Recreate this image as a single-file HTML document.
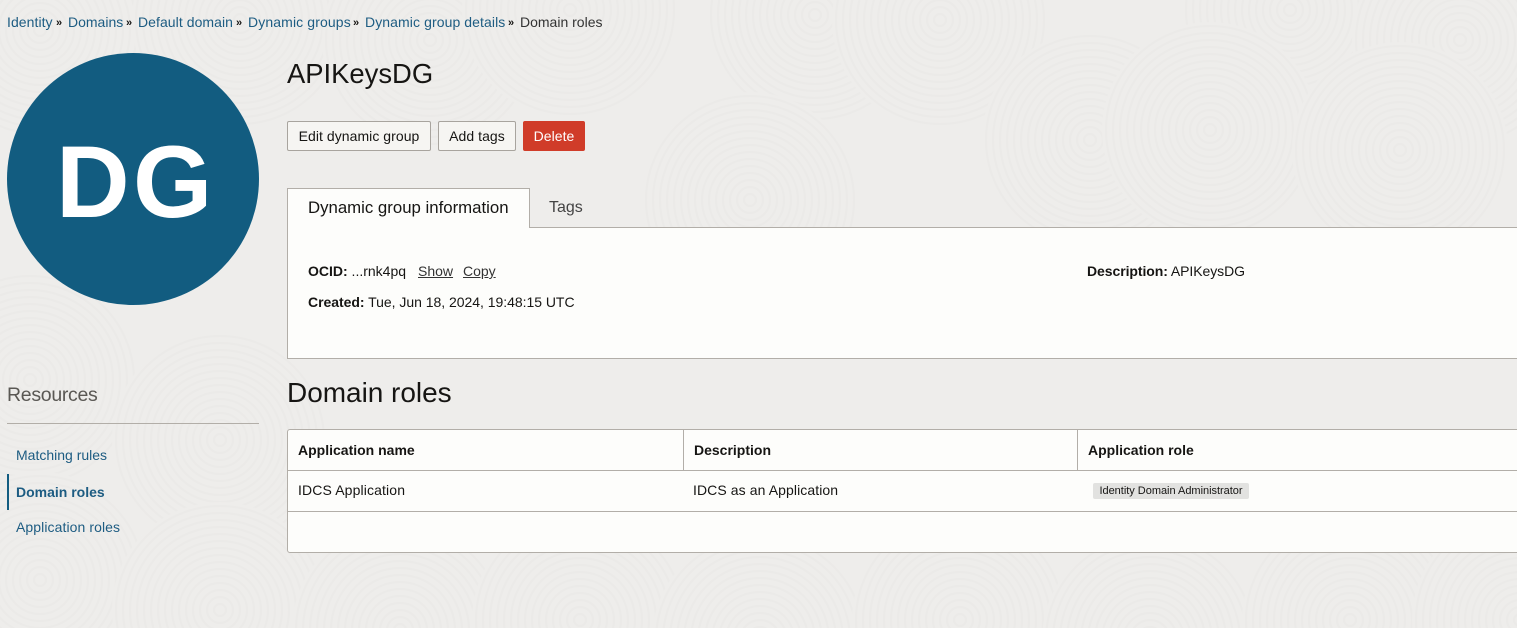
<!DOCTYPE html>
<html><head><meta charset="utf-8"><style>
html,body{margin:0;padding:0;width:1517px;height:628px;overflow:hidden;background:#eeedeb;font-family:"Liberation Sans",sans-serif;color:#161513;font-size:14px}
#w{position:absolute;left:0;top:0;width:1517px;height:628px;overflow:hidden}
.a{position:absolute;white-space:nowrap;line-height:1}
.l{color:#1d5c82}
.bg{position:absolute;left:0;top:0;display:block}
.btn{position:absolute;box-sizing:border-box;height:30px;border:1px solid #a8a49e;border-radius:2px;background:#f6f5f2;font-size:14px;line-height:28px;text-align:center;letter-spacing:.05px}
.box{position:absolute;box-sizing:border-box;background:#fdfdfb;border:1px solid #b2aea8}
.ln{position:absolute;background:#b2aea8}
.s{font-size:11px;font-weight:700;top:18px}
b{font-weight:700}
</style></head><body><div id="w">
<svg class="bg" width="1517" height="628" viewBox="0 0 1517 628">
<defs><g id="r"><circle r="108" fill="#eeedeb"/><g fill="none" stroke="#ebeae8" stroke-width="2">
<circle r="6"/><circle r="13"/><circle r="20"/><circle r="27"/><circle r="34"/><circle r="41"/><circle r="48"/><circle r="55"/><circle r="62"/><circle r="69"/><circle r="76"/><circle r="83"/><circle r="90"/><circle r="97"/><circle r="104"/></g></g>
<pattern id="p" patternUnits="userSpaceOnUse" x="0" y="0" width="1517" height="628">
<use href="#r" x="40" y="30"/><use href="#r" x="240" y="20"/><use href="#r" x="430" y="40"/><use href="#r" x="570" y="10"/>
<use href="#r" x="815" y="15"/><use href="#r" x="1290" y="10"/><use href="#r" x="1460" y="40"/><use href="#r" x="940" y="20"/>
<use href="#r" x="1090" y="140"/><use href="#r" x="1210" y="130"/><use href="#r" x="1400" y="150"/><use href="#r" x="750" y="200"/>
<use href="#r" x="30" y="380"/><use href="#r" x="220" y="440"/><use href="#r" x="40" y="580"/><use href="#r" x="220" y="610"/>
<use href="#r" x="400" y="630"/><use href="#r" x="580" y="620"/><use href="#r" x="760" y="640"/><use href="#r" x="960" y="620"/>
<use href="#r" x="1150" y="640"/><use href="#r" x="1350" y="620"/><use href="#r" x="1520" y="620"/>
</pattern></defs>
<rect x="0" y="0" width="1517" height="628" fill="url(#p)"/>
</svg>

<div class="a l" style="left:7px;top:15px;letter-spacing:.06px">Identity</div>
<div class="a s" style="left:56px">»</div>
<div class="a l" style="left:68px;top:15px">Domains</div>
<div class="a s" style="left:126px">»</div>
<div class="a l" style="left:138px;top:15px;letter-spacing:.06px">Default domain</div>
<div class="a s" style="left:236px">»</div>
<div class="a l" style="left:248px;top:15px;letter-spacing:.12px">Dynamic groups</div>
<div class="a s" style="left:353px">»</div>
<div class="a l" style="left:365px;top:15px;letter-spacing:.09px">Dynamic group details</div>
<div class="a s" style="left:508px">»</div>
<div class="a" style="left:520px;top:15px;color:#333">Domain roles</div>

<div style="position:absolute;left:7px;top:53px;width:252px;height:252px;border-radius:50%;background:#125c80"></div>
<div class="a" style="left:56px;top:131px;font-size:102px;font-weight:700;color:#fff">D</div>
<div class="a" style="left:133px;top:131px;font-size:102px;font-weight:700;color:#fff">G</div>

<div class="a" style="left:287px;top:60px;font-size:27.4px">APIKeysDG</div>
<div class="btn" style="left:287px;top:121px;width:144px">Edit dynamic group</div>
<div class="btn" style="left:438px;top:121px;width:78px">Add tags</div>
<div class="btn" style="left:523px;top:121px;width:62px;background:#d03c29;border-color:#d03c29;color:#fff">Delete</div>

<div class="box" style="left:287px;top:227px;width:1240px;height:132px"></div>
<div class="box" style="left:287px;top:188px;width:243px;height:40px;border-bottom:none;z-index:2"></div>
<div class="a" style="left:308px;top:200px;font-size:16.8px;z-index:3">Dynamic group information</div>
<div class="a" style="left:549px;top:200px;font-size:16px;color:#444">Tags</div>
<div class="a" style="left:308px;top:264px"><b>OCID:</b> ...rnk4pq</div>
<div class="a" style="left:418px;top:264px;text-decoration:underline;color:#333">Show</div>
<div class="a" style="left:463px;top:264px;text-decoration:underline;color:#333">Copy</div>
<div class="a" style="left:308px;top:295px;letter-spacing:-.03px"><b>Created:</b> Tue, Jun 18, 2024, 19:48:15 UTC</div>
<div class="a" style="left:1087px;top:264px;letter-spacing:-.07px"><b>Description:</b> APIKeysDG</div>

<div class="a" style="left:7px;top:386px;font-size:19.5px;color:#5a5854;letter-spacing:-.3px">Resources</div>
<div class="ln" style="left:7px;top:423px;width:252px;height:1px"></div>
<div class="a l" style="left:16px;top:448px">Matching rules</div>
<div style="position:absolute;left:7px;top:474px;width:2px;height:36px;background:#125c80"></div>
<div class="a l" style="left:16px;top:485px"><b>Domain roles</b></div>
<div class="a l" style="left:16px;top:520px;letter-spacing:.08px">Application roles</div>

<div class="a" style="left:287px;top:379px;font-size:28px;letter-spacing:-.03px">Domain roles</div>
<div class="box" style="left:287px;top:429px;width:1240px;height:124px;border-radius:3px"></div>
<div class="ln" style="left:288px;top:470px;width:1229px;height:1px"></div>
<div class="ln" style="left:288px;top:511px;width:1229px;height:1px"></div>
<div class="ln" style="left:683px;top:430px;width:1px;height:40px"></div>
<div class="ln" style="left:1077px;top:430px;width:1px;height:40px"></div>
<div class="a" style="left:298px;top:443px"><b>Application name</b></div>
<div class="a" style="left:694px;top:443px"><b>Description</b></div>
<div class="a" style="left:1088px;top:443px"><b>Application role</b></div>
<div class="a" style="left:298px;top:483px;letter-spacing:.13px">IDCS Application</div>
<div class="a" style="left:693px;top:483px;letter-spacing:.09px">IDCS as an Application</div>
<div class="a" style="left:1093px;top:483px;width:156px;height:16px;background:#e2e2e0;border-radius:2px;font-size:11px;line-height:17px;text-align:center;letter-spacing:-.02px">Identity Domain Administrator</div>
</div></body></html>
